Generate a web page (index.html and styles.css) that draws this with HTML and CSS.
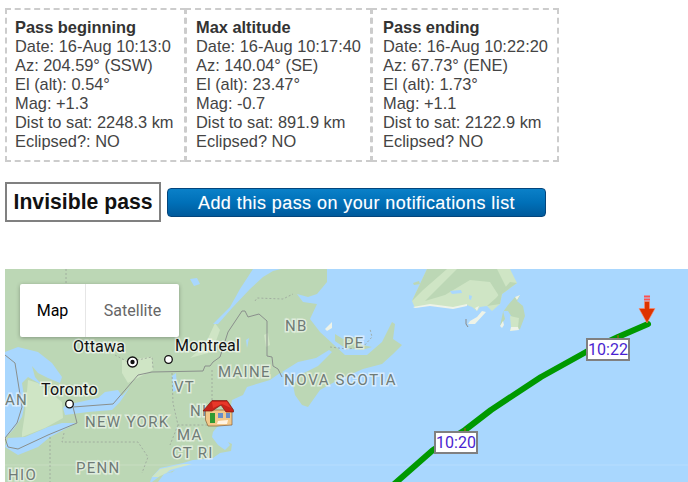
FILE: index.html
```html
<!DOCTYPE html>
<html lang="en">
<head>
<meta charset="utf-8">
<title>Pass details</title>
<link rel="stylesheet" href="styles.css">
</head>
<body>
<section class="passes">
  <div class="pass pass-a">
    <strong>Pass beginning</strong>
    <span>Date: 16-Aug 10:13:0</span>
    <span>Az: 204.59° (SSW)</span>
    <span>El (alt): 0.54°</span>
    <span>Mag: +1.3</span>
    <span>Dist to sat: 2248.3 km</span>
    <span>Eclipsed?: NO</span>
  </div>
  <div class="pass pass-b">
    <strong>Max altitude</strong>
    <span>Date: 16-Aug 10:17:40</span>
    <span>Az: 140.04° (SE)</span>
    <span>El (alt): 23.47°</span>
    <span>Mag: -0.7</span>
    <span>Dist to sat: 891.9 km</span>
    <span>Eclipsed? NO</span>
  </div>
  <div class="pass pass-c">
    <strong>Pass ending</strong>
    <span>Date: 16-Aug 10:22:20</span>
    <span>Az: 67.73° (ENE)</span>
    <span>El (alt): 1.73°</span>
    <span>Mag: +1.1</span>
    <span>Dist to sat: 2122.9 km</span>
    <span>Eclipsed? NO</span>
  </div>
</section>
<section class="actions">
  <div class="visibility">Invisible pass</div>
  <button class="notify" type="button">Add this pass on your notifications list</button>
</section>
<section class="map">
  <svg class="map-art" viewBox="5 269 683 213" width="683" height="213" aria-label="Map of the satellite pass">
    <rect class="water" x="5" y="269" width="683" height="213"/>
    <!-- mainland -->
    <path class="land" d="M5 269H327V282L317 294L308 297L297 294L303 302L317 304L310 319L320 332L333 344L345 355L367 355L382 342L392 322L395 324L393 339L402 345L393 354L382 364L363 369L340 379L320 390L308 407L302 405L295 395L293 385L300 375L280 373L270 380L247 387L243 395L232 400L228 422L217 427L213 432L212 437L218 445L225 450L230 445L228 442L232 444L231 451L220 453L213 458L193 460L183 463L160 468L152 477L150 482H5Z"/>
    <!-- light land -->
    <path class="land-light" d="M22 433L25 413L28 380L38 383L62 402L63 418L45 428L22 437Z"/>
    <path class="land-light" d="M122 360L152 357L153 370L128 383L122 373Z"/>
    <path class="land-light" d="M205 345L215 323L220 330L212 352L190 358Z"/>
    <path class="land-light" d="M264 335L268 333L270 345L266 347Z"/>
    <!-- St Lawrence -->
    <path class="water" d="M253 269L240 289L230 307L213 324L218 324L233 307L250 289L263 277L273 271L281 269Z"/>
    <path class="water" d="M190 279L197 278L200 284L194 286Z"/>
    <!-- Bay of Fundy -->
    <path class="water" d="M282 372L298 362L316 358L329 350L332 352L318 366L300 375L290 378Z"/>
    <!-- great lakes -->
    <path class="water" d="M5 352L18 347L38 352L52 363L62 377L60 383L48 378L38 373L32 366L35 377L42 385L28 377L22 383L25 403L22 417L13 430L5 438Z"/>
    <path class="water" d="M63 408L68 403L75 403L98 398L105 392L118 390L122 396L130 387L120 402L112 410L88 412L73 414L65 415Z"/>
    <path class="water" d="M8 438L25 437L48 427L62 423L77 423L50 437L38 447L18 455L5 447Z"/>
    <path class="water" d="M172 376L176 373L177 390L173 392Z"/>
    <path class="water" d="M246 340L249 338L247 348Z"/>
    <!-- Long Island -->
    <path class="land-light" d="M192 464L170 470L162 477L152 477L160 469L183 464Z"/>
    <path class="land" d="M160 476L175 470L160 482H152Z"/>
    <path class="water" d="M158 482L164 474L172 472L166 482Z"/>
    <!-- Prince Edward Island -->
    <path class="land" d="M335 334L343 339L355 337L362 345L372 347L362 350L345 348L335 341Z"/>
    <path class="snow" d="M325 329L332 322L332 328L327 331Z"/>
    <!-- Newfoundland -->
    <path class="land-light" d="M427 269L412 301L415 308L430 305L453 308L467 305L472 307L477 311L480 307L487 306L492 311L500 304L502 294L517 283L510 269Z"/>
    <path class="land" d="M427 269H447L423 290L412 301Z"/>
    <path class="land" d="M457 269H497L507 289L499 296L490 282L470 280L445 295L425 301Z"/>
    <path class="land" d="M487 306L500 304L502 294L517 283L510 282L496 298Z"/>
    <path class="land" d="M413 283L419 281L420 284L414 285Z"/>
    <path class="water" d="M450 291L461 290L462 293L452 294Z"/>
    <path class="water" d="M469 295L472 296L471 300L469 299Z"/>
    <path class="land" d="M515 297L520 296L517 301L523 306L525 316L520 329L510 331L512 324L513 319L508 311L503 311L505 319L500 326L503 312L508 305Z"/>
    <path class="land-light" d="M510 316L519 318L518 327L511 327Z"/>
    <path class="snow" d="M413 307L430 304L453 307L467 304L467 306L453 309L430 306L415 308Z"/>
    <path class="snow" d="M468 324L475 324L486 312L482 311L477 317L470 321Z"/>
    <path class="snow" d="M500 326L503 321L504 325L502 328Z"/>
    <path class="snow" d="M510 331L511 327L518 327L519 330Z"/>
    <path class="snow" d="M515 297L520 295L517 300Z"/>
    <path class="snow" d="M475 308L479 306L477 311Z"/>
    <path class="road-tick" d="M466 319L466 324L468 327"/>
    <!-- borders -->
    <path class="border" d="M5 355L15 363L22 407L17 423L5 438L8 447L18 449L48 435L77 423L73 407L113 404L138 375L152 372L203 371L205 366L210 366L213 362L220 357L228 332L242 311L245 311L248 317L259 314L267 321L267 356L272 357L273 366L278 369L282 377"/>
    <path class="border-state" d="M66 269V283M115 355L128 362L152 357L153 368M64 433L62 442H138L148 457L142 473M50 437V482M172 373L173 403L178 425H208M212 370V400M178 425L170 445M255 301L257 298L283 299L293 294M330 347L347 349L363 347L372 337L370 329"/>
    <line class="seam" x1="5" y1="465" x2="688" y2="465"/>
    <!-- pass track -->
    <path class="track" d="M392 486L433 450L465 430L491 410L541 377L586 352L618 337L648 324"/>
    <path class="tick" d="M618 335v3M465 428v3"/>
    <!-- place names -->
    <text class="city" x="73" y="352">Ottawa</text>
    <text class="city" x="175" y="351">Montreal</text>
    <text class="city" x="41" y="395">Toronto</text>
    <circle class="capital" cx="132.500" cy="362" r="5"/>
    <circle class="capital-dot" cx="132.500" cy="362" r="2.200"/>
    <circle class="capital" cx="168.500" cy="359.500" r="3.800"/>
    <circle class="capital" cx="69.500" cy="404" r="3.800"/>
    <text class="region" x="5" y="405">AN</text>
    <text class="region" x="85" y="427">NEW YORK</text>
    <text class="region" x="174" y="392">VT</text>
    <text class="region" x="190" y="416">NI</text>
    <text class="region" x="177" y="440">MA</text>
    <text class="region" x="172" y="458">CT RI</text>
    <text class="region" x="76" y="473">PENN</text>
    <text class="region" x="8" y="479.500">HIO</text>
    <text class="region" x="218" y="377">MAINE</text>
    <text class="region region-wide" x="284" y="385">NOVA SCOTIA</text>
    <text class="region" x="285" y="331">NB</text>
    <text class="region" x="344" y="348">PE</text>
    <!-- home marker -->
    <g class="home">
      <path class="home-wall" d="M205.500 410H232V425L217 426H208L205.500 420Z"/>
      <path class="home-roof" d="M203 411L212 400.500H227L233.500 410V412H226L221 405L212 411Z"/>
      <path class="home-roof-top" d="M212 402L227 402L231 408L222 404L213 408Z"/>
      <path class="home-door" d="M210 413H215V423H210Z"/>
      <path class="home-window" d="M218 413H223V418H218ZM226 413H230V418H226Z"/>
      <path class="home-step" d="M218 421L228 420L227 424L217 424Z"/>
    </g>
    <!-- satellite arrow -->
    <g class="arrow">
      <path class="arrow-stripe" d="M644 295.500H650V297.500H644ZM644 298.500H650V300.500H644Z"/>
      <path class="arrow-head" d="M644.500 301.500H649.500V308.500H655L647 323L639 308.500H644.500Z"/>
    </g>
  </svg>
  <div class="type-control">
    <span class="type-btn type-on">Map</span>
    <span class="type-btn type-off">Satellite</span>
  </div>
  <div class="time-tag tag-22">10:22</div>
  <div class="time-tag tag-20">10:20</div>
</section>
</body>
</html>
```
FILE: styles.css
```css
html, body { margin: 0; padding: 0; background: #fff; }
body {
  width: 688px;
  height: 482px;
  overflow: hidden;
  font-family: "Liberation Sans", Arial, sans-serif;
}
.passes {
  display: flex;
  margin: 8px 0 0 5px;
  width: 554px;
  height: 154px;
}
.pass {
  box-sizing: border-box;
  display: flex;
  flex-direction: column;
  padding: 8px 0 0 8px;
  border: 2px dashed #ccc;
  font-size: 16.4px;
  line-height: 19px;
  color: #444;
  white-space: nowrap;
}
.pass strong { color: #333; }
.pass-a { width: 181px; }
.pass-b { width: 187px; margin-left: -1px; padding-left: 9px; }
.pass-c { width: 188px; margin-left: -1px; padding-left: 10px; }

.actions {
  display: flex;
  align-items: center;
  gap: 6px;
  margin: 20px 0 0 5px;
  height: 40px;
}
.visibility {
  box-sizing: border-box;
  width: 156px;
  height: 40px;
  border: 2px solid #808080;
  font-size: 21.2px;
  font-weight: bold;
  line-height: 36px;
  text-align: center;
  color: #111;
  white-space: nowrap;
}
.notify {
  box-sizing: border-box;
  width: 379px;
  height: 29px;
  padding: 2px 0 0;
  border: 1px solid #04457c;
  border-radius: 4px;
  background: linear-gradient(#0a80c8, #0070b8 50%, #005a9c);
  color: #fff;
  font-family: "Liberation Sans", Arial, sans-serif;
  font-size: 18px;
  letter-spacing: .42px;
  text-shadow: 0 0 1px rgba(255,255,255,.3);
}

.map {
  position: relative;
  margin: 47px 0 0 5px;
  width: 683px;
  height: 213px;
  overflow: hidden;
}
.map-art { display: block; }
.water { fill: #a9d7fe; }
.land { fill: #bcd7b5; }
.land-light { fill: #cfe5c5; }
.snow { fill: #eef3e8; }
.border { fill: none; stroke: #8a8f8c; stroke-width: 1; }
.border-state { fill: none; stroke: #9aa39a; stroke-width: .8; stroke-dasharray: 2 2; }
.road-tick { fill: none; stroke: #888; stroke-width: 1; }
.track { fill: none; stroke: #009900; stroke-width: 6; stroke-linecap: round; stroke-linejoin: round; }
.tick { fill: none; stroke: #c8501a; stroke-width: 1; }
.seam { stroke: #fff; stroke-opacity: .18; stroke-width: 1; }
.city {
  font-family: Roboto, sans-serif;
  font-size: 16px;
  letter-spacing: .2px;
  fill: #111;
  stroke: #fff;
  stroke-opacity: .65;
  stroke-width: 3px;
  paint-order: stroke;
}
.region {
  font-family: Roboto, sans-serif;
  font-size: 15px;
  letter-spacing: 1.3px;
  fill: #6f7b76;
  stroke: #fff;
  stroke-opacity: .55;
  stroke-width: 3px;
  paint-order: stroke;
}
.region-wide { letter-spacing: 1.65px; }
.capital { fill: #fff; stroke: #111; stroke-width: 1.300; }
.capital-dot { fill: #111; }
.home-wall { fill: #f2c88a; stroke: #7a4a20; stroke-width: .6; }
.home-roof { fill: #c8241a; stroke: #7a1a12; stroke-width: .7; }
.home-roof-top { fill: #e8382a; }
.home-door { fill: #2e9a32; }
.home-window { fill: #6a8fc8; }
.home-step { fill: #fff4e4; }
.arrow-stripe { fill: #ff5050; }
.arrow-head { fill: #dd3300; stroke: #ff8a6a; stroke-width: .6; }

.type-control {
  position: absolute;
  left: 15px;
  top: 15px;
  display: flex;
  width: 159px;
  height: 53px;
  background: #fff;
  border-radius: 2px;
  box-shadow: 0 1px 4px rgba(0,0,0,.3);
  font-family: Roboto, sans-serif;
  font-size: 16px;
}
.type-btn {
  display: flex;
  align-items: center;
  justify-content: center;
}
.type-on { width: 65px; color: #000; border-right: 1px solid #e6e6e6; }
.type-off { flex: 1; color: #666; }
.time-tag {
  position: absolute;
  box-sizing: border-box;
  width: 44px;
  height: 23px;
  border: 2px solid #808080;
  background: #fff;
  color: #4a1fd0;
  font-family: Roboto, sans-serif;
  font-size: 16px;
  line-height: 19px;
  text-align: center;
}
.tag-22 { left: 581px; top: 69px; }
.tag-20 { left: 429px; top: 162px; }
```
